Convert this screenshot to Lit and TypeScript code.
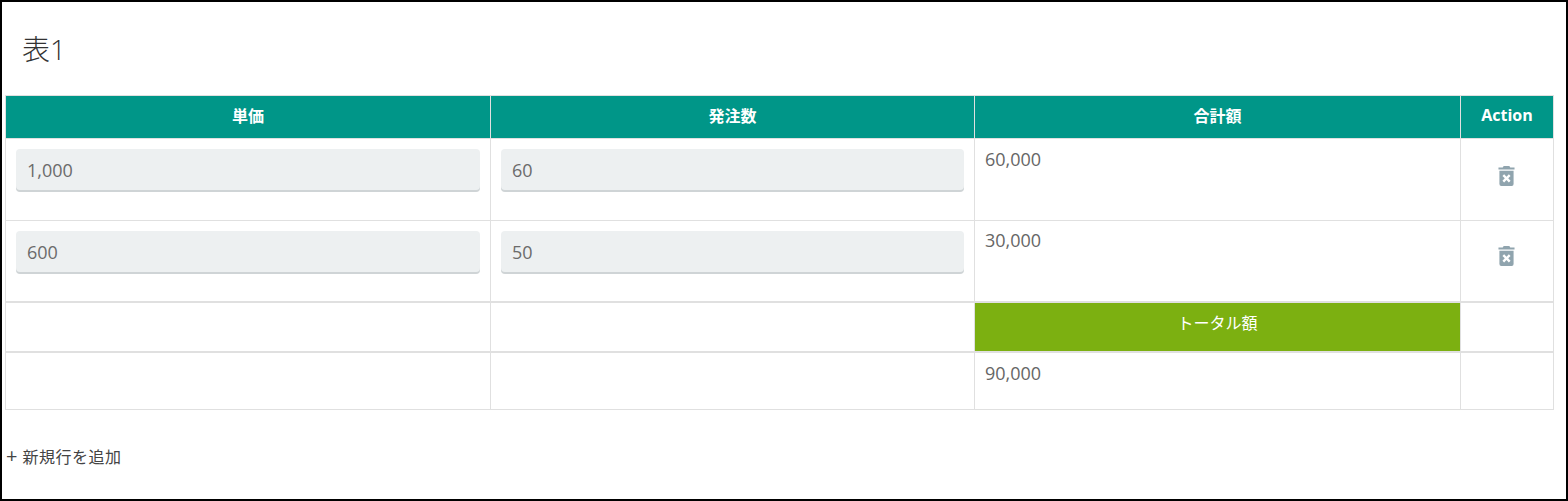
import { LitElement, html, css } from 'lit';
import { customElement } from 'lit/decorators.js';

@customElement('app-root')
export class AppRoot extends LitElement {
  static styles = css`
    :host {
      display: block;
      box-sizing: border-box;
      width: 1568px;
      height: 501px;
      border: 2px solid #000;
      background: #fff;
      color: #666;
      font-family: "Open Sans", "Noto Sans CJK JP", sans-serif;
      font-size: 18px;
      overflow: hidden;
    }
    .title {
      margin: 0;
      padding: 27px 0 0 20px;
      height: 93px;
      box-sizing: border-box;
      font-size: 28px;
      line-height: 40px;
      font-weight: 300;
      color: #333;
    }
    table {
      margin-left: 3px;
      width: 1548px;
      border-collapse: collapse;
      table-layout: fixed;
    }
    th, td {
      border: 1px solid #e0e0e0;
      padding: 0;
      vertical-align: top;
    }
    th {
      background: #009688;
      color: #fff;
      height: 43px;
      padding-bottom: 4px;
      box-sizing: border-box;
      font-size: 16px;
      font-weight: 700;
      text-align: center;
      vertical-align: middle;
    }
    .row td { height: 81px; }
    .row + .row td { height: 80px; }
    .cell { padding: 10px; }
    .value { line-height: 22px; padding-top: 9px; }
    .row + .row .value { padding-top: 8px; }
    .input {
      box-sizing: border-box;
      height: 41px;
      margin-bottom: 2px;
      padding: 0 11px;
      display: flex;
      align-items: center;
      background: #edf0f1;
      border-radius: 4px;
      box-shadow: 0 2px 0 #cfd4d6;
      color: #6b6b6b;
    }
    .action svg { display: block; margin: 26px 0 0 37px; }
    .row + .row .action svg { margin-top: 24px; }
    .spacer td { height: 48px; border-top-width: 2px; }
    .total {
      background: #7cb011;
      color: #fff;
      text-align: center;
      font-size: 16px;
      line-height: 40px;
    }
    .foot td { height: 56px; border-top-width: 2px; }
    .add {
      margin-top: 36px;
      padding-left: 4px;
      font-size: 16px;
      line-height: 22px;
      color: #444;
      letter-spacing: 0.5px;
    }
    .plus { font-size: 20px; line-height: 20px; }
  `;

  private rows = [
    { price: '1,000', qty: '60', sum: '60,000' },
    { price: '600', qty: '50', sum: '30,000' },
  ];

  private trash() {
    return html`<svg width="17" height="22" viewBox="0 0 18 22" fill="#90a4ae">
      <path d="M6 0.5h6l1 1.5h4.5v2h-17v-2h4.5z" />
      <path fill-rule="evenodd" d="M1.5 5.5h15v14a2 2 0 0 1-2 2h-11a2 2 0 0 1-2-2zM6.5 9.2L4.7 11 7.2 13.5 4.7 16 6.5 17.8 9 15.3 11.5 17.8 13.3 16 10.8 13.5 13.3 11 11.5 9.2 9 11.7z" />
    </svg>`;
  }

  render() {
    return html`
      <h1 class="title">表1</h1>
      <table>
        <colgroup>
          <col style="width:485px" />
          <col style="width:484px" />
          <col style="width:486px" />
          <col style="width:93px" />
        </colgroup>
        <thead>
          <tr><th>単価</th><th>発注数</th><th>合計額</th><th>Action</th></tr>
        </thead>
        <tbody>
          ${this.rows.map(
            (r) => html`<tr class="row">
              <td><div class="cell"><div class="input">${r.price}</div></div></td>
              <td><div class="cell"><div class="input">${r.qty}</div></div></td>
              <td><div class="cell value">${r.sum}</div></td>
              <td class="action">${this.trash()}</td>
            </tr>`
          )}
          <tr class="spacer"><td></td><td></td><td class="total">トータル額</td><td></td></tr>
          <tr class="foot"><td></td><td></td><td><div class="cell value">90,000</div></td><td></td></tr>
        </tbody>
      </table>
      <div class="add"><span class="plus">+</span> 新規行を追加</div>
    `;
  }
}
